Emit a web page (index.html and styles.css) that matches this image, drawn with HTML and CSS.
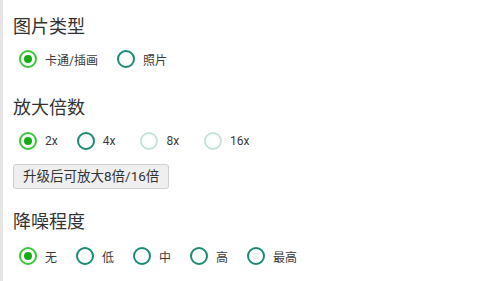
FILE: index.html
```html
<!DOCTYPE html>
<html lang="zh">
<head>
<meta charset="utf-8">
<link rel="stylesheet" href="styles.css">
</head>
<body>
<div class="page">
  <h2 class="title first">图片类型</h2>
  <div class="radios">
    <label class="radio checked"><span class="dot"></span><span class="txt">卡通/插画</span></label>
    <label class="radio"><span class="dot"></span><span class="txt">照片</span></label>
  </div>

  <h2 class="title second">放大倍数</h2>
  <div class="radios">
    <label class="radio checked"><span class="dot"></span><span class="txt">2x</span></label>
    <label class="radio wide"><span class="dot"></span><span class="txt">4x</span></label>
    <label class="radio disabled wide"><span class="dot"></span><span class="txt">8x</span></label>
    <label class="radio disabled"><span class="dot"></span><span class="txt">16x</span></label>
  </div>
  <button class="upgrade">升级后可放大8倍/16倍</button>

  <h2 class="title third">降噪程度</h2>
  <div class="radios">
    <label class="radio checked"><span class="dot"></span><span class="txt">无</span></label>
    <label class="radio"><span class="dot"></span><span class="txt">低</span></label>
    <label class="radio"><span class="dot"></span><span class="txt">中</span></label>
    <label class="radio"><span class="dot"></span><span class="txt">高</span></label>
    <label class="radio"><span class="dot"></span><span class="txt">最高</span></label>
  </div>
</div>
</body>
</html>
```

FILE: styles.css
```css
html, body {
  margin: 0;
  padding: 0;
  background: #ffffff;
}

body {
  font-family: Roboto, "Noto Sans CJK SC", sans-serif;
  color: #333333;
}

.page {
  box-sizing: border-box;
  min-height: 281px;
  border-left: 3px solid #e6e6e6;
  padding: 15px 0 0 10px;
  display: flex;
  flex-direction: column;
  align-items: flex-start;
}

.title {
  margin: 0;
  font-size: 18px;
  line-height: 24px;
  font-weight: normal;
  color: #333333;
}

.title.second { margin-top: 26px; }
.title.third { margin-top: 21px; }

.radios {
  display: flex;
  align-items: center;
  height: 22px;
  margin-top: 9px;
  padding-left: 6px;
}

.title.second + .radios { margin-top: 10px; }
.title.third + .radios { margin-top: 11px; }

.radio {
  display: flex;
  align-items: center;
  margin-right: 19px;
  font-size: 12px;
  color: #3a3a3a;
}

.radio.wide { margin-right: 25px; }

.dot {
  box-sizing: border-box;
  width: 18px;
  height: 18px;
  border-radius: 50%;
  border: 2px solid #1b8a72;
  margin-right: 8px;
  display: flex;
  align-items: center;
  justify-content: center;
}

.radio.checked .dot {
  border-color: #3dc43d;
}

.radio.checked .dot::after {
  content: "";
  width: 8px;
  height: 8px;
  border-radius: 50%;
  background: #12ad12;
}

.radio.disabled .dot {
  border-color: #c3e4dd;
}

.upgrade {
  margin-top: 12px;
  height: 25px;
  padding: 0 9px;
  font-family: Roboto, "Noto Sans CJK SC", sans-serif;
  font-size: 13.5px;
  color: #333333;
  background: #efefef;
  border: 1px solid #cfcfcf;
  border-radius: 3px;
  line-height: 23px;
}
```
